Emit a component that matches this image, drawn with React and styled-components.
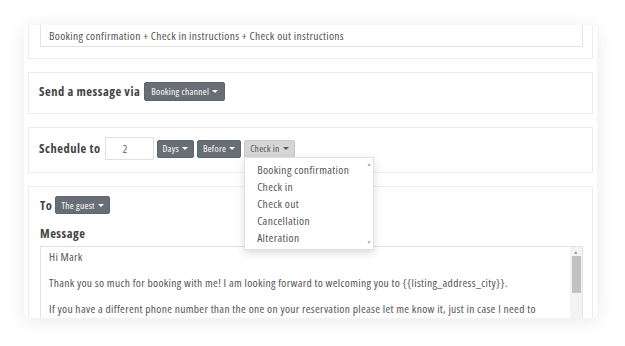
import React from 'react';
import styled, { createGlobalStyle } from 'styled-components';

const GlobalStyle = createGlobalStyle`
  body {
    margin: 0;
    background: #ffffff;
    font-family: "Open Sans", "Noto Sans", sans-serif;
    font-stretch: 80%;
    letter-spacing: 0.33px;
  }
`;

const Page = styled.div`
  width: 625px;
  height: 346px;
  box-sizing: border-box;
  padding: 25px 28px 28px 24px;
  background: #ffffff;
`;

const Frame = styled.div`
  height: 100%;
  position: relative;
  background: #ffffff;
  border-radius: 6px;
  box-shadow: 0 3px 18px rgba(40, 50, 70, 0.10);
  overflow: hidden;
  padding: 0 4px;
`;

const Stack = styled.div`
  display: flex;
  flex-direction: column;
  gap: 13px;
  margin-top: -13px;
`;

const Card = styled.section`
  border: 1px solid #ececec;
  background: #fff;
  box-sizing: border-box;
  display: flex;
  flex-direction: ${({ column }) => (column ? 'column' : 'row')};
  align-items: ${({ column }) => (column ? 'stretch' : 'center')};
  height: ${({ h }) => (h ? `${h}px` : 'auto')};
  padding: ${({ pad }) => pad || '0 10px 3px'};
  gap: 4px;
`;

const TitleBox = styled.div`
  flex: 1;
  height: 23px;
  border: 1px solid #e3e3e3;
  box-sizing: border-box;
  display: flex;
  align-items: center;
  padding: 0 8px;
  font-size: 11.5px;
  color: #555;
`;

const Label = styled.span`
  font-weight: 700;
  font-size: 12.5px;
  letter-spacing: 0.5px;
  color: #444;
`;

const Row = styled.div`
  display: flex;
  align-items: center;
  gap: 3px;
`;

const Caret = styled.span`
  display: inline-block;
  width: 0;
  height: 0;
  margin-left: 3px;
  border-left: 3px solid transparent;
  border-right: 3px solid transparent;
  border-top: 3px solid currentColor;
`;

const DropButton = styled.div`
  position: relative;
  height: ${({ tall }) => (tall ? 19 : 18)}px;
  box-sizing: border-box;
  padding: 0 ${({ tall }) => (tall ? 6 : 5)}px;
  display: flex;
  align-items: center;
  font-size: 9.5px;
  letter-spacing: 0.25px;
  border-radius: 2px;
  background: ${({ light }) => (light ? '#d6d6d6' : '#686e75')};
  color: ${({ light }) => (light ? '#555' : '#fff')};
  border: 1px solid ${({ light }) => (light ? '#c9c9c9' : '#5f656c')};
  white-space: nowrap;
`;

const NumberBox = styled.div`
  width: 49px;
  height: 23px;
  box-sizing: border-box;
  border: 1px solid #e0e0e0;
  display: flex;
  align-items: center;
  padding-left: 17px;
  font-size: 11.5px;
  color: #666;
`;

const Menu = styled.div`
  position: absolute;
  top: 16px;
  left: -1px;
  width: 130px;
  box-sizing: border-box;
  background: #fff;
  border: 1px solid #e2e2e2;
  box-shadow: 0 3px 8px rgba(0, 0, 0, 0.15);
  display: flex;
  z-index: 2;
  letter-spacing: 0.35px;
`;

const MenuList = styled.ul`
  list-style: none;
  margin: 0;
  padding: 3px 0;
  flex: 1;
`;

const MenuItem = styled.li`
  height: 17px;
  display: flex;
  align-items: center;
  padding-left: 12px;
  font-size: 11.5px;
  color: #555;
`;

const MiniScroll = styled.div`
  width: 8px;
  display: flex;
  flex-direction: column;
  justify-content: space-between;
  align-items: center;
  padding: 4px 0;
  color: #aaa;
  font-size: 5px;
  line-height: 5px;
`;

const FieldTitle = styled.div`
  font-weight: 700;
  font-size: 12.5px;
  letter-spacing: 0.5px;
  color: #444;
  margin: 7px 0 0;
`;

const TextBox = styled.div`
  border: 1px solid #e3e3e3;
  display: flex;
  height: 90px;
`;

const TextBody = styled.div`
  flex: 1;
  padding: 3px 8px;
  font-size: 11.5px;
  letter-spacing: 0.32px;
  line-height: 13px;
  color: #555;
`;

const Para = styled.p`
  margin: 0 0 13px;
`;

const Scrollbar = styled.div`
  width: 12px;
  background: #f3f3f3;
  display: flex;
  flex-direction: column;
  align-items: center;
`;

const ScrollArrow = styled.div`
  height: 9px;
  display: flex;
  align-items: center;
  color: #999;
  font-size: 5px;
`;

const Thumb = styled.div`
  width: 9px;
  height: 37px;
  background: #c1c1c1;
`;

const Button = ({ children, light, tall, menu }) => (
  <DropButton light={light} tall={tall}>
    {children}
    <Caret />
    {menu}
  </DropButton>
);

export default function App() {
  const options = ['Booking confirmation', 'Check in', 'Check out', 'Cancellation', 'Alteration'];

  return (
    <Page>
      <GlobalStyle />
      <Frame>
        <Stack>
          <Card pad="11px 9px 11px 11px">
            <TitleBox>Booking confirmation + Check in instructions + Check out instructions</TitleBox>
          </Card>
          <Card h={42}>
            <Label>Send a message via</Label>
            <Button tall>Booking channel</Button>
          </Card>
          <Card h={46}>
            <Label>Schedule to</Label>
            <Row>
              <NumberBox>2</NumberBox>
              <Button>Days</Button>
              <Button>Before</Button>
              <Button
                light
                menu={
                  <Menu>
                    <MenuList>
                      {options.map((o) => (
                        <MenuItem key={o}>{o}</MenuItem>
                      ))}
                    </MenuList>
                    <MiniScroll>
                      <span>▲</span>
                      <span>▼</span>
                    </MiniScroll>
                  </Menu>
                }
              >
                Check in
              </Button>
            </Row>
          </Card>
          <Card column pad="9px 9px 0 11px">
            <Row>
              <Label>To</Label>
              <Button>The guest</Button>
            </Row>
            <FieldTitle>Message</FieldTitle>
            <TextBox>
              <TextBody>
                <Para>Hi Mark</Para>
                <Para>Thank you so much for booking with me! I am looking forward to welcoming you to {'{{listing_address_city}}'}.</Para>
                <Para>If you have a different phone number than the one on your reservation please let me know it, just in case I need to</Para>
              </TextBody>
              <Scrollbar>
                <ScrollArrow>▲</ScrollArrow>
                <Thumb />
              </Scrollbar>
            </TextBox>
          </Card>
        </Stack>
      </Frame>
    </Page>
  );
}
